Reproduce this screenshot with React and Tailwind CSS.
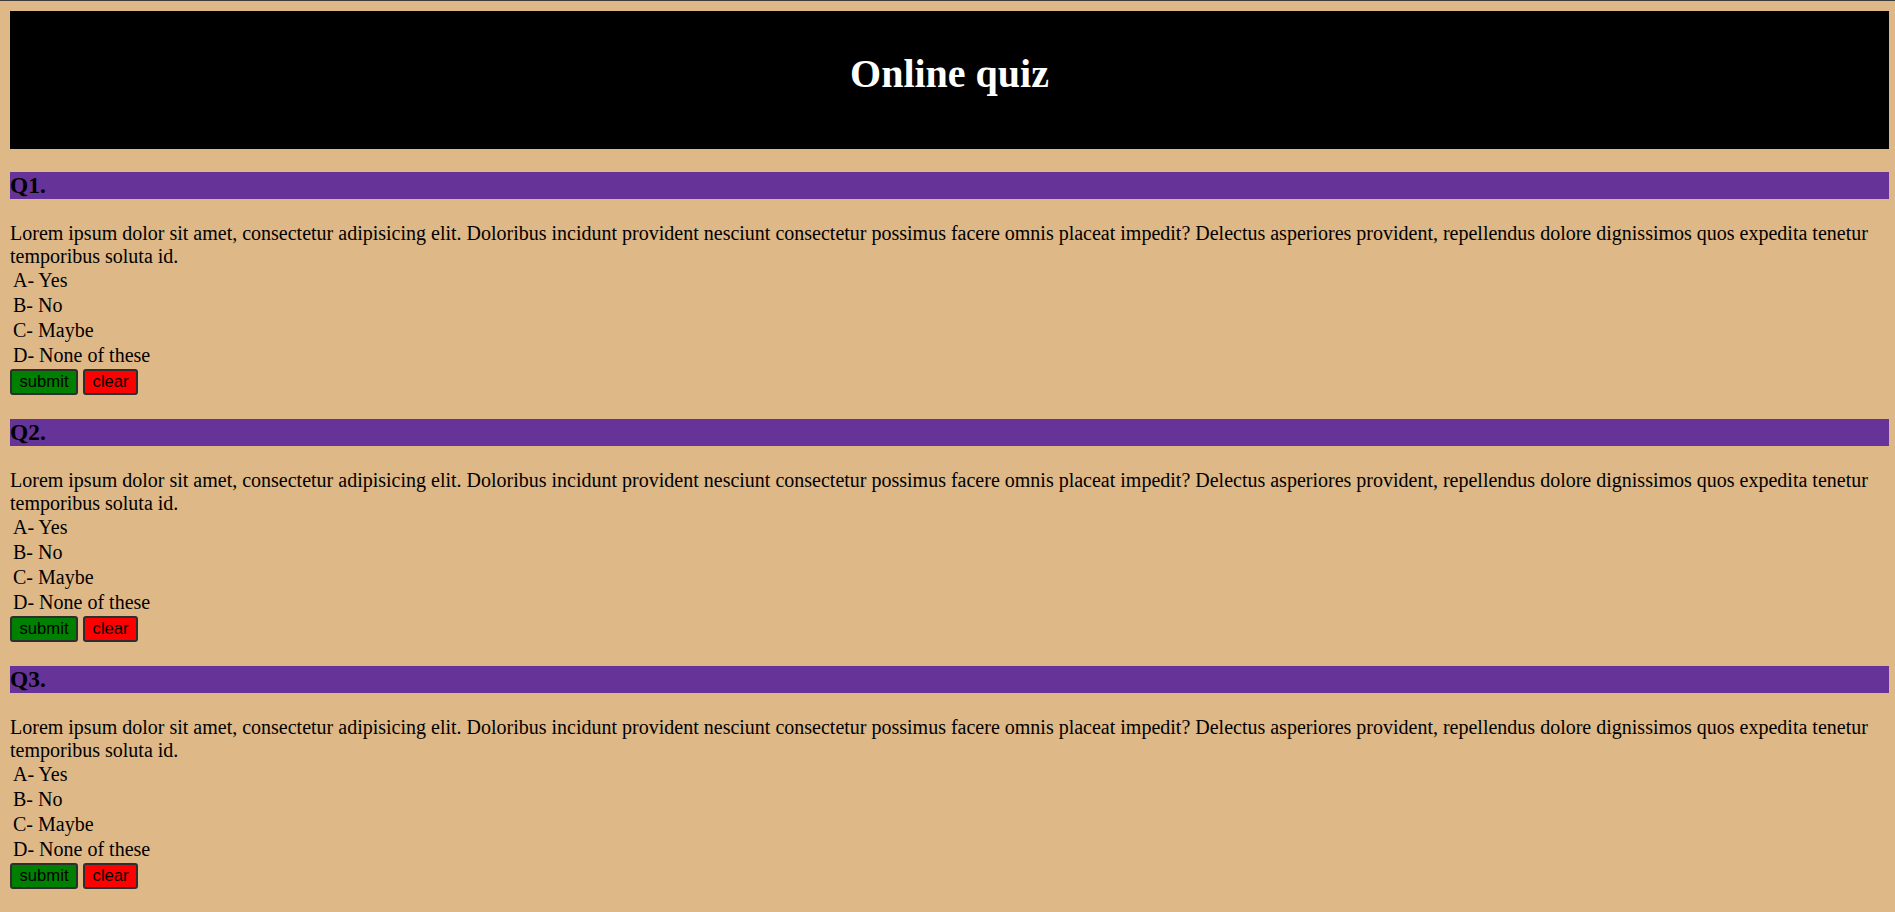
const questions = ["Q1.", "Q2.", "Q3."];

const options = ["A- Yes", "B- No", "C- Maybe", "D- None of these"];

const lorem =
  "Lorem ipsum dolor sit amet, consectetur adipisicing elit. Doloribus incidunt provident nesciunt consectetur possimus facere omnis placeat impedit? Delectus asperiores provident, repellendus dolore dignissimos quos expedita tenetur temporibus soluta id.";

export default function App() {
  return (
    <div className="min-h-screen border-t border-[#3c3c3c] bg-[#deb887] pb-[40px] pl-[10px] pr-[6px] pt-[10px] font-['Liberation_Serif','Times_New_Roman',serif] text-black">
      <header className="h-[138px] bg-black pt-[40px] text-center">
        <h1 className="text-[40px] font-bold leading-[46px] text-white">
          Online quiz
        </h1>
      </header>

      {questions.map((q, i) => (
        <section key={q} className={i === 0 ? "mt-[23px]" : "mt-[24px]"}>
          <h3 className="h-[27px] bg-[#663399] text-[23.4px] font-bold leading-[27px]">
            {q}
          </h3>

          <p className="mt-[23px] text-[20px] leading-[23px]">{lorem}</p>

          <div className="text-[20px]">
            {options.map((opt) => (
              <div key={opt} className="h-[25px] pl-[3px] leading-[25px]">
                {opt}
              </div>
            ))}
          </div>

          <div className="mt-[1px] flex h-[26px] gap-[5px]">
            <button className="h-[26px] rounded-[3px] border-2 border-[#2e2e2e] bg-[#008000] px-[7.5px] font-['Liberation_Sans',Arial,sans-serif] text-[16.67px] leading-[20px] text-black">
              submit
            </button>
            <button className="h-[26px] rounded-[3px] border-2 border-[#2e2e2e] bg-[#ff0000] px-[7.5px] font-['Liberation_Sans',Arial,sans-serif] text-[16.67px] leading-[20px] text-black">
              clear
            </button>
          </div>
        </section>
      ))}
    </div>
  );
}
